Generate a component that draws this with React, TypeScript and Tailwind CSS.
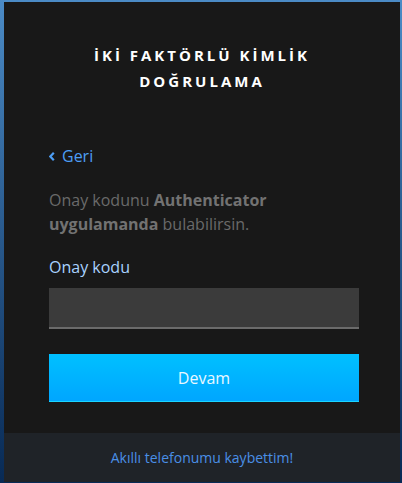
export default function App() {
    return (
        <div className="w-[402px] h-[483px] bg-gradient-to-b from-[#4b8bc6] to-[#082a55] pl-[4px] pt-[2px] pr-[2px] pb-[1px] font-['Open_Sans',sans-serif]">
            <article className="h-full flex flex-col bg-[#181818]">
                <div className="flex-1 pl-[45px] pr-[41px] pt-[40px]">
                    <h1 className="-ml-[45px] -mr-[41px] text-center text-white font-bold text-[15px] leading-[26px] tracking-[0.2em] uppercase">
                        İKİ FAKTÖRLÜ KİMLİK
                        <br />
                        DOĞRULAMA
                    </h1>

                    <a className="mt-[50px] flex items-center text-[16px] leading-[24px] text-[#4d9ef5] cursor-pointer">
                        <svg width="6" height="9" viewBox="0 0 6 9" className="mr-[7px] mt-[1px]">
                            <polyline points="4.8,0.8 1.3,4.5 4.8,8.2" fill="none" stroke="currentColor" strokeWidth="2.2" />
                        </svg>
                        Geri
                    </a>

                    <p className="mt-[20px] text-[16px] leading-[24px] text-[#6a6a6a]">
                        Onay kodunu <b className="font-bold text-[#727272]">Authenticator uygulamanda</b> bulabilirsin.
                    </p>

                    <label className="block mt-[19px] text-[16px] leading-[24px] text-[#a9d2ff]">Onay kodu</label>
                    <input
                        type="text"
                        className="mt-[9px] block w-full h-[41px] bg-[#3b3b3b] border-b-2 border-[#6b6b6b] outline-none px-3 text-white"
                    />

                    <button className="mt-[25px] w-full h-[48px] bg-gradient-to-b from-[#00c0ff] to-[#00a6ff] border-b border-[#1ad4ff] text-[#eaf8ff] text-[16px]">
                        Devam
                    </button>
                </div>

                <footer className="h-[49px] flex items-center justify-center bg-[#1f2328]">
                    <a className="text-[14px] text-[#4a8fe6] cursor-pointer">Akıllı telefonumu kaybettim!</a>
                </footer>
            </article>
        </div>
    );
}
